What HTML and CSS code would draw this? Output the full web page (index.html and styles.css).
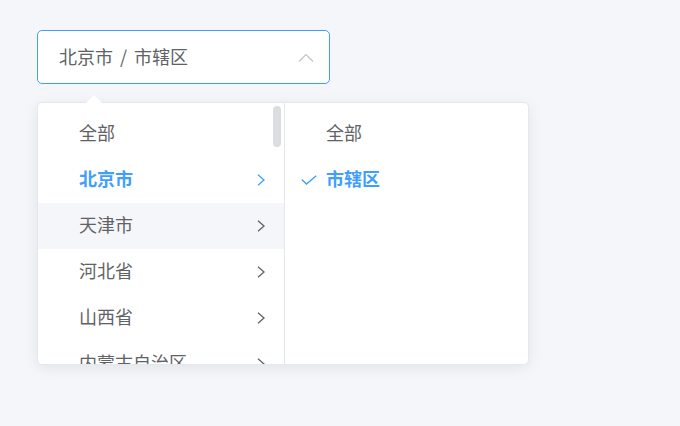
FILE: index.html
```html
<!doctype html>
<html lang="zh">
<head>
<meta charset="utf-8">
<meta name="viewport" content="width=device-width, initial-scale=1">
<title>级联选择器</title>
<link rel="stylesheet" href="styles.css">
</head>
<body>

<div class="cascader">
    <div class="cascader-input">
        <span class="value">北京市 / 市辖区</span>
        <svg class="caret" width="16" height="9" viewBox="0 0 16 9"><polyline points="1,8.5 8,1.5 15,8.5" fill="none" stroke="#c0c4cc" stroke-width="1.2"/></svg>
    </div>

    <div class="panel">
        <span class="panel-arrow"></span>
        <div class="menu menu-first">
            <ul>
                <li>全部</li>
                <li class="active">北京市<i class="next"></i></li>
                <li class="hover">天津市<i class="next"></i></li>
                <li>河北省<i class="next"></i></li>
                <li>山西省<i class="next"></i></li>
                <li>内蒙古自治区<i class="next"></i></li>
            </ul>
            <span class="thumb"></span>
        </div>
        <div class="menu">
            <ul>
                <li>全部</li>
                <li class="active checked">
                    <svg class="check" width="16" height="10" viewBox="0 0 16 10"><polyline points="0.8,4.5 5.5,9 15.2,0.8" fill="none" stroke="#409eff" stroke-width="1.4"/></svg>市辖区
                </li>
            </ul>
        </div>
    </div>
</div>

<!-- 右侧箭头，复用同一个svg -->
<svg width="0" height="0" style="position:absolute">
    <defs>
        <symbol id="arrowRight" viewBox="0 0 8 12"><polyline points="1,0.8 7,6 1,11.2" fill="none" stroke-width="1.3"/></symbol>
    </defs>
</svg>
<script>
(function() {
    var icons = document.querySelectorAll('.next');
    for (var i = 0; i < icons.length; i++) {
        icons[i].innerHTML = '<svg width="8" height="12"><use href="#arrowRight"/></svg>';
    }
}())
</script>
</body>
</html>
```

FILE: styles.css
```css
body{
    margin: 0;
    padding: 30px 37px;
    background-color: #f5f6fa;
    font-family: "Noto Sans CJK SC", "Liberation Sans", sans-serif;
    font-size: 18px;
    color: #606266;
}
ul{
    list-style: none;
    margin: 0;
    padding: 0;
}
i{
    font-style: normal;
}
.cascader{
    width: 492px;
}
.cascader-input{
    box-sizing: border-box;
    width: 293px;
    height: 54px;
    display: flex;
    align-items: center;
    justify-content: space-between;
    padding: 0 15px 0 21px;
    background-color: #fff;
    border: 1px solid #409eff;
    border-radius: 5px;
}
.value{
    word-spacing: 3px;
    margin-top: -3px;
}
.caret{
    display: block;
    margin-top: 1px;
}
.panel{
    position: relative;
    box-sizing: border-box;
    margin-top: 18px;
    height: 263px;
    display: flex;
    background-color: #fff;
    border: 1px solid #e4e7ed;
    border-radius: 5px;
    box-shadow: 0 3px 14px rgba(0, 0, 0, 0.08);
}
.panel-arrow{
    position: absolute;
    top: -8px;
    left: 48px;
    width: 0;
    height: 0;
    border-left: 8px solid transparent;
    border-right: 8px solid transparent;
    border-bottom: 8px solid #fff;
}
.menu{
    position: relative;
    flex: 1;
    overflow: hidden;
}
.menu ul{
    padding: 8px 0;
}
.menu-first{
    flex: none;
    width: 246px;
    border-right: 1px solid #e4e7ed;
}
.menu li{
    box-sizing: border-box;
    height: 46px;
    display: flex;
    align-items: center;
    padding: 0 19px 5px 41px;
    white-space: nowrap;
}
.menu li.hover{
    background-color: #f5f6fa;
}
.menu li.active{
    color: #409eff;
    font-weight: bold;
}
.next{
    margin-left: auto;
    display: flex;
    margin-top: 5px;
    stroke: #606266;
}
.next svg{
    display: block;
}
.active .next{
    stroke: #409eff;
}
.menu li.checked{
    position: relative;
}
.check{
    position: absolute;
    left: 16px;
    top: 18px;
}
.thumb{
    position: absolute;
    top: 3px;
    right: 3px;
    width: 8px;
    height: 41px;
    border-radius: 4px;
    background-color: #dcdde0;
}
```
